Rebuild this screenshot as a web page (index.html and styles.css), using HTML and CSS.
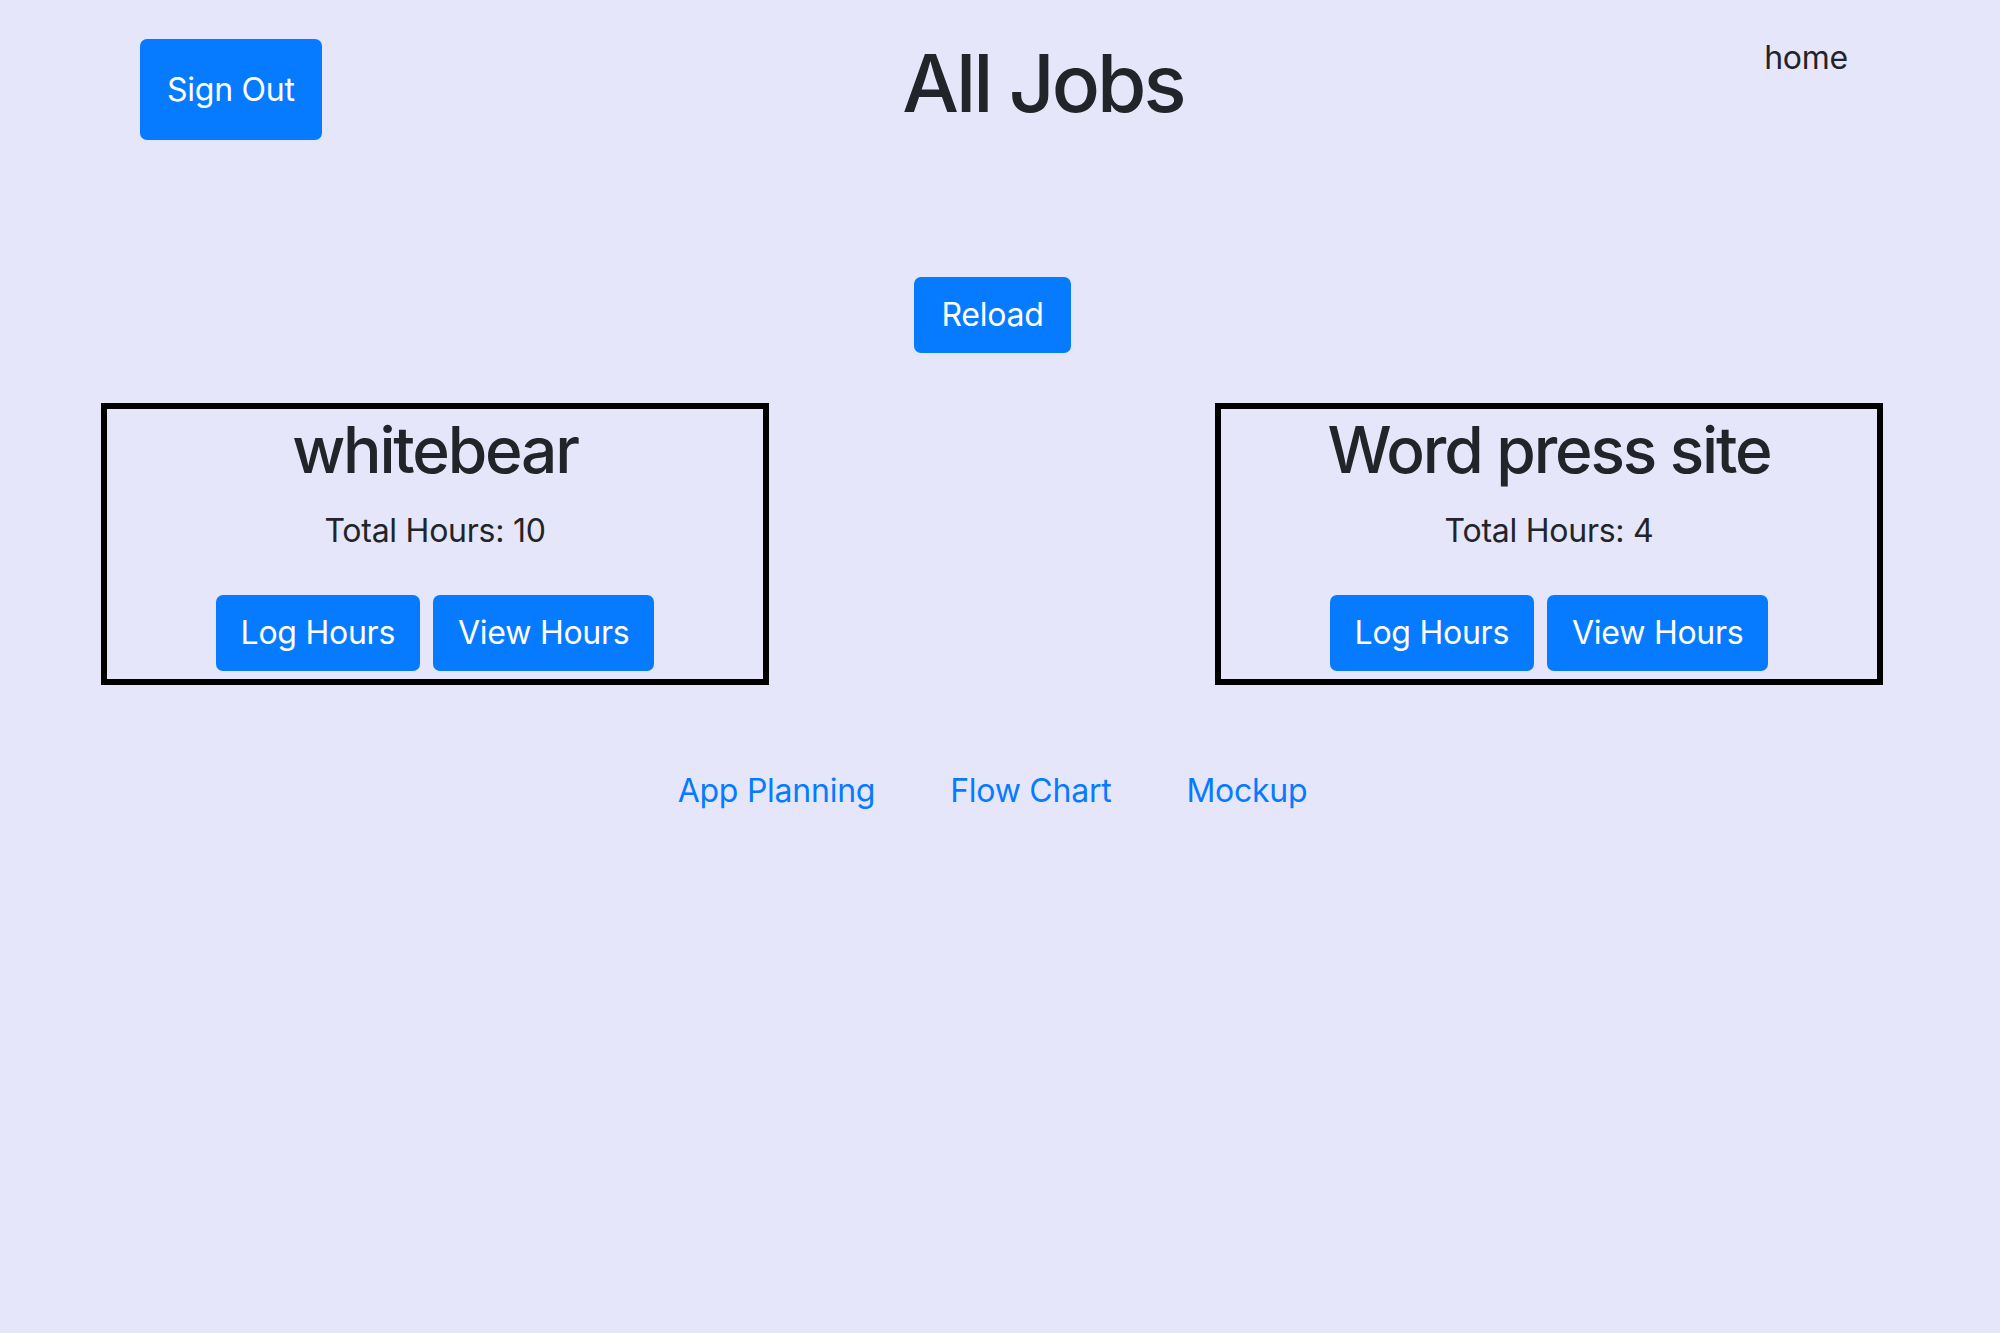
FILE: index.html
```html
<!DOCTYPE html>
<html lang="en">
<head>
<meta charset="utf-8">
<title>All Jobs</title>
<link rel="stylesheet" href="styles.css">
</head>
<body>
<div class="page">
  <header class="top">
    <button class="btn btn-signout" type="button">Sign Out</button>
    <h1 class="title">All Jobs</h1>
    <a class="home" href="#">home</a>
  </header>

  <div class="reload-row">
    <button class="btn" type="button">Reload</button>
  </div>

  <main class="jobs">
    <section class="job-card">
      <h2 class="job-name">whitebear</h2>
      <p class="job-hours">Total Hours: 10</p>
      <div class="job-actions">
        <button class="btn" type="button">Log Hours</button>
        <button class="btn" type="button">View Hours</button>
      </div>
    </section>
    <section class="job-card">
      <h2 class="job-name">Word press site</h2>
      <p class="job-hours">Total Hours: 4</p>
      <div class="job-actions">
        <button class="btn" type="button">Log Hours</button>
        <button class="btn" type="button">View Hours</button>
      </div>
    </section>
  </main>

  <nav class="links">
    <a href="#">App Planning</a>
    <a href="#">Flow Chart</a>
    <a href="#">Mockup</a>
  </nav>
</div>
</body>
</html>
```

FILE: styles.css
```css
html, body {
  margin: 0;
  padding: 0;
}

body {
  background: #e6e6fa;
  color: #212529;
  font-family: "Inter", "Liberation Sans", "DejaVu Sans", sans-serif;
  font-size: 32px;
  line-height: 48px;
  letter-spacing: -0.25px;
  min-height: 1333px;
}

.page {
  width: 1985px;
}

.btn {
  display: inline-block;
  background: #077bff;
  color: #ffffff;
  border: 2px solid #077bff;
  border-radius: 7px;
  font-family: inherit;
  font-size: 32px;
  line-height: 48px;
  font-weight: 400;
  letter-spacing: -0.25px;
  padding: 12px 25px;
  margin: 0;
  cursor: pointer;
}

.top {
  display: flex;
  justify-content: space-between;
  align-items: flex-start;
  padding: 0 137px 0 140px;
}

.btn-signout {
  margin-top: 39px;
  padding: 25px 25px 24px;
}

.title {
  margin: 35px 0 0;
  font-size: 80px;
  line-height: 96px;
  font-weight: 500;
  letter-spacing: -3px;
}

.home {
  margin-top: 34px;
  color: #212529;
  text-decoration: none;
}

.reload-row {
  display: flex;
  justify-content: center;
  margin-top: 137px;
}

.jobs {
  display: flex;
  justify-content: space-between;
  padding: 0 102px 0 101px;
  margin-top: 50px;
}

.job-card {
  width: 656px;
  border: 6px solid #000000;
  text-align: center;
  padding: 2px 0 8px;
}

.job-name {
  margin: 0 0 19px;
  font-size: 64px;
  line-height: 77px;
  font-weight: 500;
  letter-spacing: -2.2px;
}

.job-hours {
  margin: 0 0 40px;
}

.job-actions {
  display: flex;
  justify-content: center;
  gap: 13px;
}

.job-actions .btn {
  padding: 12px 23px;
}

.links {
  display: flex;
  justify-content: center;
  gap: 75px;
  margin-top: 82px;
}

.links a {
  color: #077bff;
  text-decoration: none;
}
```
